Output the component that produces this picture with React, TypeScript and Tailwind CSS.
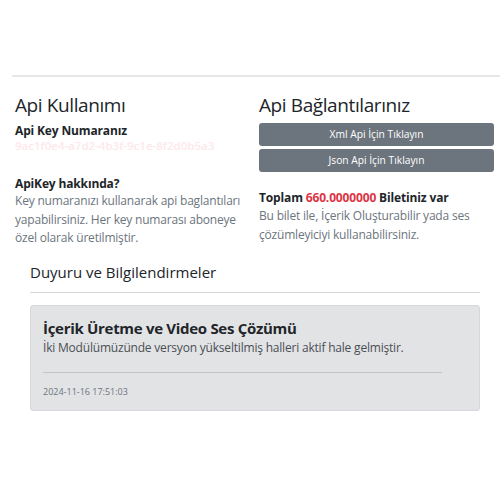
export default function App() {
  return (
    <div className="min-h-[500px] w-[500px] bg-white font-['Open_Sans',sans-serif] text-[#212529]">
      <div className="pt-[75px]">
        <div className="ml-3 border-t-2 border-[#e6e6e6]" />
      </div>

      <div className="grid grid-cols-2 gap-[9px] pl-[15px] pr-[6px] pt-[16px]">
        {/* left column */}
        <div>
          <h4 className="text-[19px] leading-[24px] tracking-[-0.4px]">Api Kullanımı</h4>
          <h6 className="mt-[6px] text-[12px] font-bold leading-[16px] tracking-[-0.15px]">Api Key Numaranız</h6>
          <p className="whitespace-nowrap text-[11.5px] font-semibold leading-[14px] text-[#fde8eb]">
            9ac1f0e4-a7d2-4b3f-9c1e-8f2d0b5a3
          </p>
          <h6 className="mt-[23px] text-[12px] font-bold leading-[16px] tracking-[-0.15px]">ApiKey hakkında?</h6>
          <p className="text-[12px] leading-[18.5px] tracking-[-0.2px] text-[#6c757d]">
            Key numaranızı kullanarak api baglantıları yapabilirsiniz. Her key numarası aboneye özel olarak
            üretilmiştir.
          </p>
        </div>

        {/* right column */}
        <div>
          <h4 className="text-[19px] leading-[24px] tracking-[-0.4px]">Api Bağlantılarınız</h4>
          <div className="mt-[6px] flex flex-col gap-[3px]">
            <button className="h-[23px] rounded-[3px] bg-[#6c757d] text-[10.25px] text-white">
              Xml Api İçin Tıklayın
            </button>
            <button className="h-[23px] rounded-[3px] bg-[#6c757d] text-[10.25px] text-white">
              Json Api İçin Tıklayın
            </button>
          </div>
          <h6 className="mt-[18px] text-[12px] font-bold leading-[16px] tracking-[-0.15px]">
            Toplam <span className="text-[#dc3545]">660.0000000</span> Biletiniz var
          </h6>
          <p className="text-[12px] leading-[19px] tracking-[-0.2px] text-[#6c757d]">
            Bu bilet ile, İçerik Oluşturabilir yada ses çözümleyiciyi kullanabilirsiniz.
          </p>
        </div>
      </div>

      {/* announcements */}
      <div className="ml-[30px] mr-[20px] mt-[13px]">
        <h5 className="pb-[9px] text-[15px] leading-[22px]">Duyuru ve Bilgilendirmeler</h5>
        <div className="border-t border-[#d6d6d6]" />
        <div className="mt-[12px] rounded-[3px] border border-[#d6d8db] bg-[#e2e3e5] px-[12px] pb-[12px] pt-[12px]">
          <h5 className="text-[15px] font-bold leading-[20px] tracking-[-0.3px]">İçerik Üretme ve Video Ses Çözümü</h5>
          <p className="mt-[1px] text-[12px] leading-[18px] tracking-[-0.2px] text-[#4a4f55]">
            İki Modülümüzünde versyon yükseltilmiş halleri aktif hale gelmiştir.
          </p>
          <div className="mr-[25px] mt-[15px] border-t border-[#c2c4c6]" />
          <p className="mt-[13px] text-[9px] leading-[12px] text-[#6c757d]">2024-11-16 17:51:03</p>
        </div>
      </div>
    </div>
  );
}
